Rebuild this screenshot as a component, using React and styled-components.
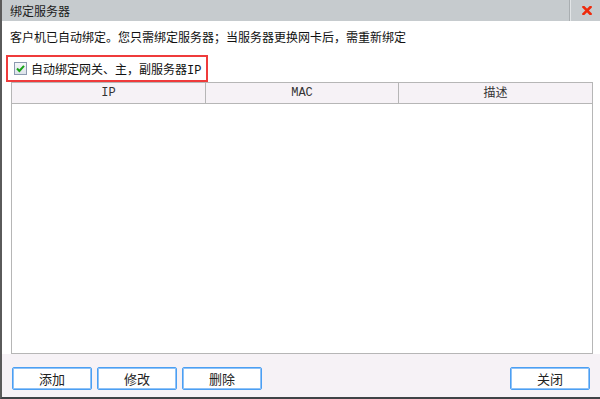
import React, { useState } from 'react';
import styled, { createGlobalStyle } from 'styled-components';

const GlobalStyle = createGlobalStyle`
  html, body {
    margin: 0;
    padding: 0;
    background: #ffffff;
  }
  body {
    font-family: "Noto Sans CJK SC", "Liberation Sans", sans-serif;
    font-size: 12px;
    color: #1a1a1a;
  }
`;

const columns = [
  { key: 'ip', title: 'IP', mono: true },
  { key: 'mac', title: 'MAC', mono: true },
  { key: 'desc', title: '描述', mono: false },
];

const App = () => {
  // 自动绑定 체크 상태
  const [autoBind, setAutoBind] = useState(true);

  return (
    <>
      <GlobalStyle />
      <StDialog>
        <StTitleBar>
          <StTitle>绑定服务器</StTitle>
          <StCloseBtn aria-label="close">
            <svg width="10" height="9" viewBox="0 0 10 9">
              <path d="M1.5 1 L8.5 8 M8.5 1 L1.5 8" stroke="#ee2a0c" strokeWidth="2.6" strokeLinecap="square" />
            </svg>
          </StCloseBtn>
        </StTitleBar>

        <StBody>
          <StMessage>客户机已自动绑定。您只需绑定服务器；当服务器更换网卡后，需重新绑定</StMessage>

          <StAutoBind onClick={() => setAutoBind(!autoBind)}>
            <StCheck>
              {autoBind && (
                <svg width="11" height="11" viewBox="0 0 11 11">
                  <path d="M2 5.5 L4.4 8 L9 2.8" stroke="#17a317" strokeWidth="2" fill="none" />
                </svg>
              )}
            </StCheck>
            <StCheckLabel>自动绑定网关、主，副服务器IP</StCheckLabel>
          </StAutoBind>

          <StTable>
            <StHeadRow>
              {columns.map((col) => (
                <StHeadCell key={col.key} $mono={col.mono}>
                  {col.title}
                </StHeadCell>
              ))}
            </StHeadRow>
            <StTableBody />
          </StTable>
        </StBody>

        <StFooter>
          <StBtnGroup>
            <StButton>添加</StButton>
            <StButton>修改</StButton>
            <StButton>删除</StButton>
          </StBtnGroup>
          <StButton>关闭</StButton>
        </StFooter>
      </StDialog>
    </>
  );
};

export default App;

const StDialog = styled.div`
  width: 600px;
  height: 399px;
  box-sizing: border-box;
  display: flex;
  flex-direction: column;
  border-left: 2px solid #5a5a5a;
  border-bottom: 2px solid #3f4346;
`;

const StTitleBar = styled.div`
  height: 21px;
  flex-shrink: 0;
  display: flex;
  align-items: center;
  justify-content: space-between;
  background: #c6cbce;
  padding-left: 8px;
`;

const StTitle = styled.span`
  font-size: 12px;
  color: #1c1c1c;
`;

const StCloseBtn = styled.div`
  width: 31px;
  height: 21px;
  box-sizing: border-box;
  display: flex;
  align-items: center;
  justify-content: center;
  border-left: 1px solid #a9aeb1;
  box-shadow: inset 1px 0 0 #e2e5e7;
  padding-left: 4px;
`;

const StBody = styled.div`
  background: #ffffff;
  display: flex;
  flex-direction: column;
`;

const StMessage = styled.div`
  height: 34px;
  box-sizing: border-box;
  padding: 8px 0 0 8px;
  line-height: 16px;
  font-size: 12px;
  color: #111;
`;

const StAutoBind = styled.div`
  margin-left: 4px;
  width: 202px;
  height: 27px;
  box-sizing: border-box;
  border: 2px solid #ef3b3b;
  display: flex;
  align-items: center;
  gap: 4px;
  padding-left: 6px;
  cursor: pointer;
`;

const StCheck = styled.span`
  width: 13px;
  height: 13px;
  box-sizing: border-box;
  border: 1px solid #8c9ab0;
  background: linear-gradient(#f4f6f9, #dde3ea);
  display: flex;
  align-items: center;
  justify-content: center;
`;

const StCheckLabel = styled.span`
  font-family: "Liberation Mono", "Noto Sans CJK SC", monospace;
  font-size: 12px;
  color: #111;
  white-space: nowrap;
`;

const StTable = styled.div`
  margin: 0 7px 0 9px;
  height: 272px;
  box-sizing: border-box;
  border: 1px solid #b6b6b6;
  display: flex;
  flex-direction: column;
`;

const StHeadRow = styled.div`
  height: 21px;
  box-sizing: border-box;
  display: grid;
  grid-template-columns: 193px 193px 1fr;
  background: #f6f2f6;
  border-bottom: 1px solid #b6b6b6;
`;

const StHeadCell = styled.div`
  display: flex;
  align-items: center;
  justify-content: center;
  line-height: 1;
  padding-bottom: ${(props) => (props.$mono ? '0' : '2px')};
  font-family: ${(props) => (props.$mono ? '"Liberation Mono", monospace' : '"Noto Sans CJK SC", sans-serif')};
  font-size: 12px;
  color: #333;
  & + & {
    border-left: 1px solid #b6b6b6;
  }
`;

const StTableBody = styled.div`
  flex: 1;
  background: #ffffff;
`;

const StFooter = styled.div`
  flex: 1;
  background: #f6f2f6;
  display: flex;
  align-items: flex-start;
  justify-content: space-between;
  padding: 13px 10px 0 10px;
`;

const StBtnGroup = styled.div`
  display: flex;
  gap: 5px;
`;

const StButton = styled.button`
  width: 80px;
  height: 23px;
  box-sizing: border-box;
  border: 1px solid #4b9ff3;
  box-shadow: inset 0 0 0 1px #8fc2f7;
  border-radius: 2px;
  background: #ffffff;
  font-family: "Noto Sans CJK SC", sans-serif;
  font-size: 13px;
  color: #222;
  padding: 0;
  cursor: pointer;
`;
